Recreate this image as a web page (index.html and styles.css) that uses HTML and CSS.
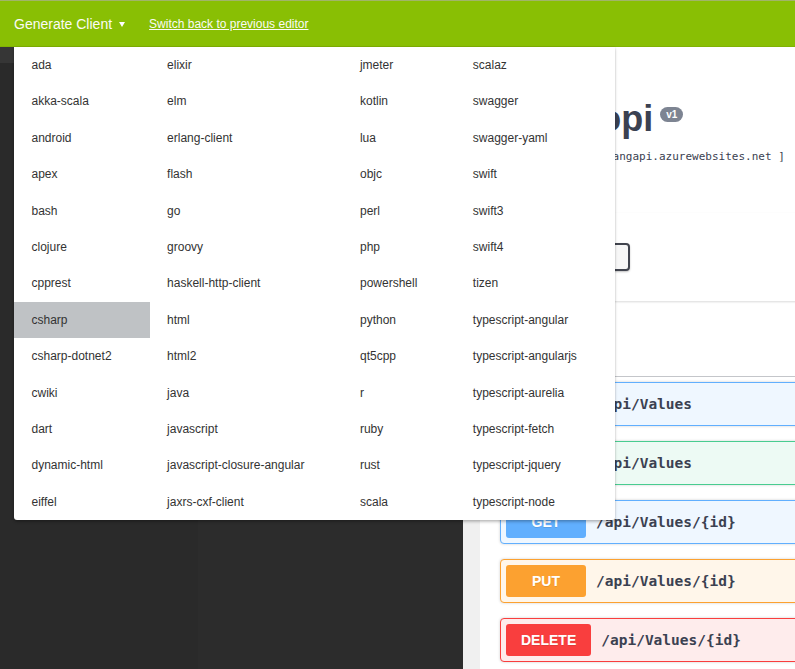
FILE: index.html
```html
<!DOCTYPE html>
<html lang="en">
<head>
<meta charset="utf-8">
<title>Swagger Editor</title>
<link rel="stylesheet" href="styles.css">
</head>
<body>
<header class="topbar">
  <div class="dd-trigger">Generate Client
    <svg class="caret" viewBox="0 0 6 6" width="6" height="6"><polygon points="0,1 6,1 3,6" fill="#fff"/></svg>
  </div>
  <a class="switch" href="#">Switch back to previous editor</a>
  <ul class="menu">
    <li>ada</li><li>akka-scala</li><li>android</li><li>apex</li><li>bash</li><li>clojure</li><li>cpprest</li><li class="active">csharp</li><li>csharp-dotnet2</li><li>cwiki</li><li>dart</li><li>dynamic-html</li><li>eiffel</li>
    <li>elixir</li><li>elm</li><li>erlang-client</li><li>flash</li><li>go</li><li>groovy</li><li>haskell-http-client</li><li>html</li><li>html2</li><li>java</li><li>javascript</li><li>javascript-closure-angular</li><li>jaxrs-cxf-client</li>
    <li>jmeter</li><li>kotlin</li><li>lua</li><li>objc</li><li>perl</li><li>php</li><li>powershell</li><li>python</li><li>qt5cpp</li><li>r</li><li>ruby</li><li>rust</li><li>scala</li>
    <li>scalaz</li><li>swagger</li><li>swagger-yaml</li><li>swift</li><li>swift3</li><li>swift4</li><li>tizen</li><li>typescript-angular</li><li>typescript-angularjs</li><li>typescript-aurelia</li><li>typescript-fetch</li><li>typescript-jquery</li><li>typescript-node</li>
  </ul>
</header>
<div class="main">
  <div class="editor">
    <div class="gutter"><div class="active-line"></div></div>
    <div class="code"></div>
  </div>
  <div class="resizer"></div>
  <div class="preview">
    <div class="swagger">
      <div class="wrapper info">
        <h2 class="title">Wongopi<span class="ver">v1</span></h2>
        <pre class="base-url">[ Base URL: core2angapi.azurewebsites.net ]</pre>
      </div>
      <section class="scheme-container">
        <div class="wrapper"><div class="select">HTTPS</div></div>
      </section>
      <div class="wrapper">
        <h4 class="tag">Values</h4>
        <div class="op get"><span class="method">GET</span><span class="path">/api/Values</span></div>
        <div class="op post"><span class="method">POST</span><span class="path">/api/Values</span></div>
        <div class="op get"><span class="method">GET</span><span class="path">/api/Values/{id}</span></div>
        <div class="op put"><span class="method">PUT</span><span class="path">/api/Values/{id}</span></div>
        <div class="op delete"><span class="method">DELETE</span><span class="path">/api/Values/{id}</span></div>
      </div>
    </div>
  </div>
</div>
</body>
</html>
```
FILE: styles.css
```css
html, body {
  margin: 0;
  height: 100%;
}
body {
  font-family: "Liberation Sans", Arial, sans-serif;
  overflow: hidden;
  display: flex;
  flex-direction: column;
}
.topbar {
  position: relative;
  flex: none;
  height: 47px;
  box-sizing: border-box;
  background: #89bf04;
  border-top: 1px solid #a1b46a;
  border-bottom: 1px solid #80b204;
  display: flex;
  align-items: center;
  padding-left: 14px;
}
.dd-trigger {
  display: flex;
  align-items: center;
  font-size: 14px;
  color: #fbfbf5;
}
.caret {
  margin-left: 7px;
}
.switch {
  margin-left: 24px;
  font-size: 12px;
  color: #fbfbf5;
  text-decoration: underline;
}
.menu {
  position: absolute;
  left: 14px;
  top: 46px;
  z-index: 10;
  margin: 0;
  padding: 0;
  list-style: none;
  background: #fff;
  border-radius: 0 0 3px 3px;
  box-shadow: 0 0 2px rgba(0,0,0,.12), 0 2px 3px rgba(0,0,0,.24);
  display: grid;
  grid-template-rows: repeat(13, 36.4px);
  grid-auto-flow: column;
  grid-auto-columns: max-content;
  overflow: hidden;
}
.menu li {
  padding: 1px 38px 0 17.5px;
  font-size: 12px;
  line-height: 35.4px;
  color: #333;
  white-space: nowrap;
}
.menu li.active {
  background: #bfc2c5;
}
.main {
  flex: 1;
  display: flex;
  min-height: 0;
}
.editor {
  width: 463px;
  flex: none;
  display: flex;
}
.gutter {
  width: 198px;
  background: #2a2a2a;
}
.active-line {
  height: 16px;
  background: #363636;
}
.code {
  flex: 1;
  background: #2c2c2c;
}
.resizer {
  width: 17px;
  flex: none;
  background: #f0f0f0;
}
.preview {
  flex: 1;
  overflow: hidden;
  background: #fff;
}
.swagger {
  width: 900px;
  color: #3b4151;
}
.wrapper {
  padding: 0 20px;
}
.info {
  padding-top: 51px;
}
.title {
  margin: 0;
  font-size: 36px;
  line-height: 41px;
  font-weight: 700;
  white-space: nowrap;
}
.ver {
  display: inline-block;
  margin-left: 7px;
  padding: 2px 6px;
  font-size: 10px;
  line-height: 11px;
  border-radius: 57px;
  background: #7d8492;
  color: #fff;
  vertical-align: 13px;
}
.base-url {
  margin: 10px 0 0;
  font-family: "DejaVu Sans Mono", monospace;
  font-size: 11px;
  line-height: 16px;
}
.scheme-container {
  margin: 48px 0 20px;
  padding: 30px 0;
  background: #fff;
  box-shadow: 0 1px 2px 0 rgba(0,0,0,.15);
}
.select {
  width: 130px;
  height: 28px;
  box-sizing: border-box;
  padding: 0 10px;
  border: 2px solid #41444e;
  border-radius: 4px;
  background: #f7f7f7;
  box-shadow: 0 1px 2px 0 rgba(0,0,0,.25);
  font-size: 14px;
  font-weight: 700;
  line-height: 24px;
}
.tag {
  margin: 0 0 5px;
  padding: 10px 20px 10px 10px;
  font-size: 24px;
  line-height: 35px;
  border-bottom: 1px solid rgba(59,65,81,.3);
}
.op {
  display: flex;
  align-items: center;
  padding: 5px;
  margin-bottom: 15px;
  border: 1px solid;
  border-radius: 4px;
  box-shadow: 0 0 3px rgba(0,0,0,.19);
}
.method {
  min-width: 80px;
  box-sizing: border-box;
  padding: 6px 15px;
  font-size: 14px;
  line-height: 20px;
  font-weight: 700;
  text-align: center;
  border-radius: 3px;
  color: #fff;
  text-shadow: 0 1px 0 rgba(0,0,0,.1);
}
.path {
  padding: 0 10px;
  font-family: "DejaVu Sans Mono", monospace;
  font-size: 14.5px;
  font-weight: 700;
}
.get { background: #eff7ff; border-color: #61affe; }
.get .method { background: #61affe; }
.post { background: #edfaf4; border-color: #49cc90; }
.post .method { background: #49cc90; }
.put { background: #fff6ea; border-color: #fca130; }
.put .method { background: #fca130; }
.delete { background: #feecec; border-color: #f93e3e; }
.delete .method { background: #f93e3e; }
```
